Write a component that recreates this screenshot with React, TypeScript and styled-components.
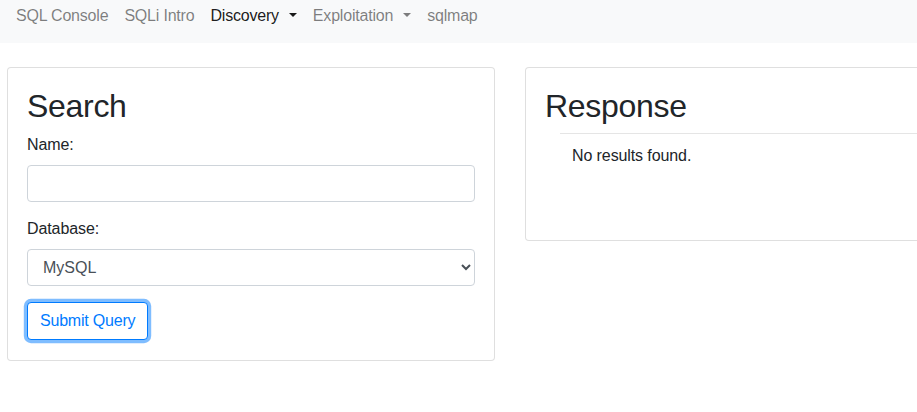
import React from "react";
import styled, { createGlobalStyle } from "styled-components";

const Global = createGlobalStyle`
  html, body { margin: 0; padding: 0; background: #fff; overflow: hidden; }
  body {
    font-family: "Liberation Sans", Arial, sans-serif;
    font-size: 16px;
    line-height: 1.5;
    color: #212529;
    letter-spacing: -0.1px;
  }
  * { box-sizing: border-box; }
`;

const Page = styled.div`
  width: 917px;
  height: 412px;
  overflow: hidden;
`;

const Navbar = styled.nav`
  display: flex;
  align-items: flex-start;
  height: 43px;
  padding: 4px 8px 0;
  background: #f8f9fa;
`;

const NavLink = styled.a<{ $active?: boolean; $dropdown?: boolean }>`
  display: inline-block;
  padding: 0 8px;
  line-height: 24px;
  letter-spacing: -0.2px;
  color: ${(p) => (p.$active ? "rgba(0,0,0,.9)" : "rgba(0,0,0,.5)")};
  text-decoration: none;
  cursor: pointer;
  ${(p) =>
    p.$dropdown &&
    `
    &::after {
      display: inline-block;
      margin-left: 10px;
      vertical-align: .255em;
      content: "";
      border-top: .3em solid;
      border-right: .3em solid transparent;
      border-bottom: 0;
      border-left: .3em solid transparent;
    }
  `}
`;

const Main = styled.main`
  display: flex;
  align-items: flex-start;
  gap: 30px;
  padding: 24px 0 0 7px;
`;

const Card = styled.section<{ $minHeight?: number }>`
  flex: 0 0 488px;
  width: 488px;
  border: 1px solid rgba(0, 0, 0, 0.125);
  border-radius: 4px;
  background: #fff;
  padding: 19px 19px 20px 19px;
  min-height: ${(p) => (p.$minHeight ? `${p.$minHeight}px` : "auto")};
`;

const Title = styled.h2<{ $mb: number }>`
  margin: 0 0 ${(p) => p.$mb}px;
  font-size: 32px;
  font-weight: 500;
  line-height: 1.2;
  letter-spacing: -0.3px;
`;

const FormGroup = styled.div<{ $mb: number }>`
  margin-bottom: ${(p) => p.$mb}px;
`;

const Label = styled.label`
  display: block;
  padding-top: 2px;
  margin-bottom: 8px;
`;

const Input = styled.input`
  display: block;
  width: 100%;
  height: 37px;
  padding: 6px 12px;
  font: inherit;
  color: #495057;
  background: #fff;
  border: 1px solid #ced4da;
  border-radius: 4px;
`;

const Select = styled.select`
  display: block;
  width: 100%;
  height: 37px;
  padding: 6px 8px 6px 11px;
  font: inherit;
  color: #495057;
  background: #fff;
  border: 1px solid #ced4da;
  border-radius: 4px;
`;

const Button = styled.button`
  display: inline-block;
  padding: 6px 12px;
  font: inherit;
  line-height: 24px;
  letter-spacing: -0.2px;
  color: #007bff;
  background: #fff;
  border: 1px solid #007bff;
  border-radius: 4px;
  box-shadow: 0 0 0 3.2px rgba(0, 123, 255, 0.5);
  outline: none;
  cursor: pointer;
`;

const Divider = styled.hr`
  margin: 0 0 10px 15px;
  border: 0;
  border-top: 1px solid rgba(0, 0, 0, 0.1);
`;

const Result = styled.p`
  margin: 0;
  padding-left: 27px;
`;

export default function App() {
  return (
    <Page>
      <Global />
      <Navbar>
        <NavLink>SQL Console</NavLink>
        <NavLink>SQLi Intro</NavLink>
        <NavLink $active $dropdown>Discovery</NavLink>
        <NavLink $dropdown>Exploitation</NavLink>
        <NavLink>sqlmap</NavLink>
      </Navbar>
      <Main>
        <Card>
          <Title $mb={6}>Search</Title>
          <FormGroup $mb={13}>
            <Label htmlFor="name">Name:</Label>
            <Input id="name" type="text" />
          </FormGroup>
          <FormGroup $mb={16}>
            <Label htmlFor="db">Database:</Label>
            <Select id="db" defaultValue="MySQL">
              <option>MySQL</option>
              <option>PostgreSQL</option>
              <option>SQLite</option>
            </Select>
          </FormGroup>
          <Button type="button">Submit Query</Button>
        </Card>
        <Card $minHeight={174}>
          <Title $mb={8}>Response</Title>
          <Divider />
          <Result>No results found.</Result>
        </Card>
      </Main>
    </Page>
  );
}
